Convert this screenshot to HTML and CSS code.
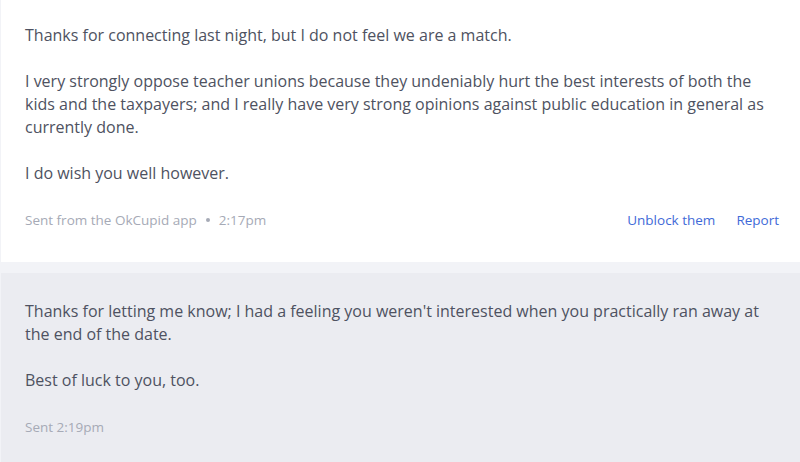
FILE: index.html
```html
<!DOCTYPE html>
<html>
<head>
<meta charset="utf-8">
<link rel="stylesheet" href="styles.css">
</head>
<body>
<div class="thread">
  <div class="msg msg-them">
    <div class="body">
      <p>Thanks for connecting last night, but I do not feel we are a match.</p>
      <p>I very strongly oppose teacher unions because they undeniably hurt the best interests of both the kids and the taxpayers; and I really have very strong opinions against public education in general as currently done.</p>
      <p>I do wish you well however.</p>
    </div>
    <div class="meta">
      <div class="meta-info">
        <span>Sent from the OkCupid app</span>
        <span class="dot"></span>
        <span>2:17pm</span>
      </div>
      <div class="actions">
        <a class="link">Unblock them</a>
        <a class="link">Report</a>
      </div>
    </div>
  </div>
  <div class="msg msg-me">
    <div class="body">
      <p>Thanks for letting me know; I had a feeling you weren't interested when you practically ran away at the end of the date.</p>
      <p>Best of luck to you, too.</p>
    </div>
    <div class="meta">
      <div class="meta-info"><span>Sent 2:19pm</span></div>
    </div>
  </div>
</div>
</body>
</html>
```
FILE: styles.css
```css
html, body {
  margin: 0;
  padding: 0;
}
body {
  background: #f2f3f7;
  font-family: "Open Sans", "Liberation Sans", sans-serif;
  width: 800px;
  height: 462px;
  overflow: hidden;
}
.thread {
  display: flex;
  flex-direction: column;
  gap: 11px;
  padding-left: 1px;
  height: 462px;
  box-sizing: border-box;
}
.msg {
  padding: 24px 21px 32px 24px;
}
.msg-them {
  background: #ffffff;
}
.msg-me {
  background: #ebecf1;
  padding-top: 27px;
  padding-bottom: 0;
  flex: 1;
  min-height: 0;
}
.body {
  color: #4e5261;
  font-size: 16px;
  line-height: 23px;
}
.body p {
  margin: 0 0 23px 0;
}
.body p:last-child {
  margin-bottom: 0;
}
.meta {
  margin-top: 25px;
  display: flex;
  justify-content: space-between;
  align-items: center;
  font-size: 13.5px;
  line-height: 20px;
}
.meta-info {
  color: #a6aab6;
  display: flex;
  align-items: center;
}
.dot {
  width: 4px;
  height: 4px;
  border-radius: 50%;
  background: #a6aab6;
  margin: 0 9px;
}
.actions {
  display: flex;
  gap: 21px;
}
.link {
  color: #3f6ad8;
  cursor: pointer;
}
```
